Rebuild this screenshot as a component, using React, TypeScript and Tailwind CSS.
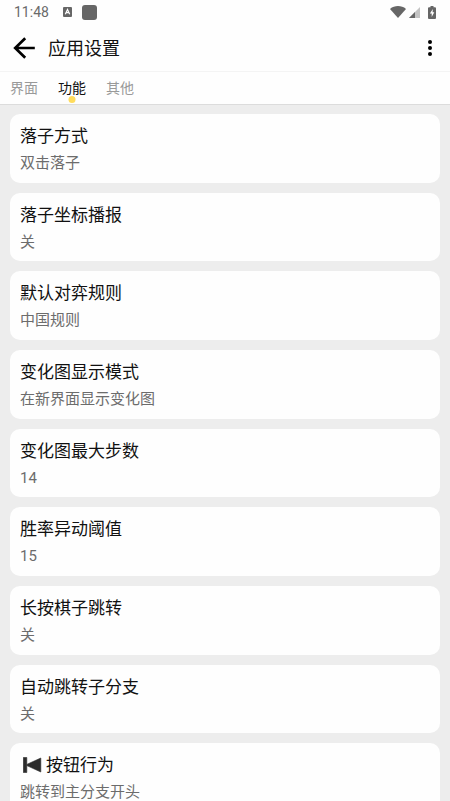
import { useState } from "react";

type Setting = { title: string; value: string; skipIcon?: boolean };

const tabs = ["界面", "功能", "其他"];

const settings: Setting[] = [
  { title: "落子方式", value: "双击落子" },
  { title: "落子坐标播报", value: "关" },
  { title: "默认对弈规则", value: "中国规则" },
  { title: "变化图显示模式", value: "在新界面显示变化图" },
  { title: "变化图最大步数", value: "14" },
  { title: "胜率异动阈值", value: "15" },
  { title: "长按棋子跳转", value: "关" },
  { title: "自动跳转子分支", value: "关" },
  { title: "按钮行为", value: "跳转到主分支开头", skipIcon: true },
];

function StatusBar() {
  return (
    <div className="flex h-6 shrink-0 items-center justify-between px-[14px] text-[#6a6a6a]">
      <div className="flex items-center">
        <span className="text-sm leading-6">11:48</span>
        <svg className="ml-[14px]" width="9" height="10" viewBox="0 0 9 10" aria-hidden="true">
          <rect width="9" height="10" rx="1" fill="#666666" />
          <path d="M2.3 7.2L4.5 2.5L6.7 7.2M3.2 5.7H5.8" fill="none" stroke="#fff" strokeWidth="1.2" />
        </svg>
        <span className="ml-[10px] size-[15px] rounded-[3px] bg-[#666666]" />
      </div>
      <div className="flex items-center">
        <svg width="16" height="12" viewBox="0 0 16 12" aria-hidden="true">
          <path d="M0 2.9C4.6-.9 11.4-.9 16 2.9L8 12z" fill="#666666" />
        </svg>
        <svg className="ml-[3px]" width="11" height="11" viewBox="0 0 11 11" aria-hidden="true">
          <path d="M0 11L11 0V11z" fill="#c4c4c4" />
          <path d="M0 11L6 5V11z" fill="#666666" />
        </svg>
        <svg className="ml-2" width="8" height="13" viewBox="0 0 8 13" aria-hidden="true">
          <path d="M2.5 0H5.5V1.2H7A1 1 0 0 1 8 2.2V12A1 1 0 0 1 7 13H1A1 1 0 0 1 0 12V2.2A1 1 0 0 1 1 1.2H2.5z" fill="#666666" />
          <path d="M4.8 3L1.9 7.4H3.7V11L6.3 6.3H4.6z" fill="#fff" />
        </svg>
      </div>
    </div>
  );
}

function SkipIcon() {
  return (
    <svg className="mr-1 ml-[3px] shrink-0" width="19" height="16" viewBox="0 0 19 16" aria-hidden="true">
      <path d="M0.3 0.5H3.8V7.4L17.8 1V15L3.8 8.6V15.5H0.3z" fill="#2b2b2b" stroke="#2b2b2b" strokeWidth="0.6" />
    </svg>
  );
}

export default function App() {
  const [active, setActive] = useState("功能");

  return (
    <div className="flex h-screen flex-col overflow-hidden bg-[#ededed] font-[Roboto,'Noto_Sans_CJK_SC',sans-serif]">
      <header className="shrink-0 border-b border-[#dcdcdc] bg-[#fefefe]">
        <StatusBar />
        <div className="flex h-12 items-center border-b border-[#f4f4f4] pr-[10px] pl-3">
          <button type="button" aria-label="返回" className="flex size-6 items-center justify-center">
            <svg width="24" height="24" viewBox="0 0 24 24" fill="none" stroke="#000" strokeWidth="2.7" aria-hidden="true">
              <path d="M22.8 12H3M13.2 2.2L3.2 12L13.2 21.8" />
            </svg>
          </button>
          <h1 className="ml-3 flex-1 pt-0.5 text-lg leading-6 text-[#111111]">应用设置</h1>
          <button type="button" aria-label="更多" className="flex size-5 items-center justify-center">
            <svg width="4" height="16" viewBox="0 0 4 16" aria-hidden="true">
              <circle cx="2" cy="2" r="2" />
              <circle cx="2" cy="8" r="2" />
              <circle cx="2" cy="14" r="2" />
            </svg>
          </button>
        </div>
        <nav role="tablist" className="flex h-8 gap-5 px-[10px]">
          {tabs.map((tab) => (
            <button
              key={tab}
              type="button"
              role="tab"
              aria-selected={tab === active}
              onClick={() => setActive(tab)}
              className={
                tab === active
                  ? "relative text-sm text-[#111111]"
                  : "relative text-sm text-[#999999]"
              }
            >
              {tab}
              {tab === active && (
                <span className="absolute bottom-px left-1/2 size-[7px] -translate-x-1/2 rounded-full bg-[#ffdc5c]" />
              )}
            </button>
          ))}
        </nav>
      </header>
      <main className="flex-1 overflow-hidden px-[10px] pt-[9px]">
        <div className="grid min-h-[698px] auto-rows-fr gap-[10px]">
          {settings.map((s) => (
            <button
              key={s.title}
              type="button"
              className="flex flex-col items-start rounded-[10px] bg-[#fefefe] px-[10px] pt-[10px] pb-2 text-left"
            >
              <span className="flex items-center text-[17px] leading-6 text-[#111111]">
                {s.skipIcon && <SkipIcon />}
                {s.title}
              </span>
              <span className="mt-1 text-[15px] leading-[22px] text-[#6c6c6c]">{s.value}</span>
            </button>
          ))}
        </div>
      </main>
    </div>
  );
}
